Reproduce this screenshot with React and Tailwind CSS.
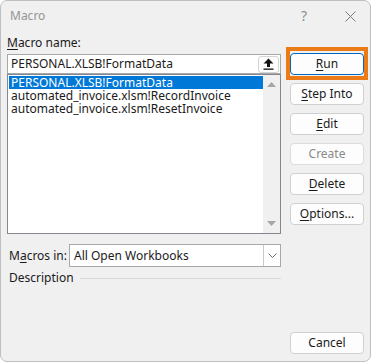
import React from "react";

function U({ children }) {
  return <span className="underline underline-offset-[2px] decoration-1">{children}</span>;
}

function Btn({ children, disabled, primary, className = "" }) {
  return (
    <button
      className={
        "h-[22px] w-[74px] rounded-[4px] border bg-[#fdfdfd] text-[12px] leading-[16px] " +
        (primary
          ? "border-[#0067c0] text-[#1a1a1a] "
          : disabled
          ? "border-[#dcdcdc] text-[#8a8a8a] "
          : "border-[#d0d0d0] text-[#1a1a1a] ") +
        className
      }
    >
      {children}
    </button>
  );
}

function UploadIcon() {
  return (
    <svg width="11" height="12" viewBox="0 0 11 12">
      <path d="M5.5 0.5 L10.5 5.5 L7 5.5 L7 9 L4 9 L4 5.5 L0.5 5.5 Z" fill="#111" />
      <rect x="0.5" y="10.5" width="10" height="1.3" fill="#111" />
    </svg>
  );
}

function Chevron() {
  return (
    <svg width="9" height="5" viewBox="0 0 9 5">
      <path d="M0.5 0.5 L4.5 4.5 L8.5 0.5" fill="none" stroke="#6b6b6b" strokeWidth="1" />
    </svg>
  );
}

export default function App() {
  const rows = [
    "PERSONAL.XLSB!FormatData",
    "automated_invoice.xlsm!RecordInvoice",
    "automated_invoice.xlsm!ResetInvoice",
  ];

  return (
    <div className="w-[372px] h-[363px] bg-white font-['Noto_Sans','Open_Sans',sans-serif] text-[12px] leading-[16px] text-[#1a1a1a] relative">
      <div className="w-[371px] h-[362px] rounded-[7px] border border-[#bfbfbf] bg-[#f0f0f0] flex flex-col overflow-hidden">
        {/* title bar */}
        <div className="h-[30px] flex items-center pl-[9px] pr-[14px] shrink-0">
          <span className="text-[12px] text-[#959595]">Macro</span>
          <span className="ml-auto text-[14px] text-[#8e8e8e] mr-[38px]">?</span>
          <svg width="11" height="11" viewBox="0 0 11 11">
            <path d="M0.5 0.5 L10.5 10.5 M10.5 0.5 L0.5 10.5" stroke="#7a7a7a" strokeWidth="1" />
          </svg>
        </div>

        <div className="flex flex-1 pl-[6px] pb-[7px]">
          {/* left column */}
          <div className="w-[274px] flex flex-col">
            <div className="mt-[4px] h-[16px]">
              <U>M</U>acro name:
            </div>
            <div className="mt-[3px] h-[20px] bg-white border border-[#a8a8a8] flex items-center pl-[3px] pr-[1px]">
              <span className="flex-1">PERSONAL.XLSB!FormatData</span>
              <div className="w-[21px] h-[17px] rounded-[3px] border border-[#d4d4d4] bg-[#fdfdfd] flex items-center justify-center">
                <UploadIcon />
              </div>
            </div>
            <div className="h-[160px] bg-white border border-[#828790] flex">
              <div className="flex-1 pt-[1px] pl-[1px]">
                {rows.map((r, i) => (
                  <div
                    key={r}
                    className={
                      "h-[13px] leading-[13px] pl-[2px] " +
                      (i === 0 ? "bg-[#0078d7] text-white" : "")
                    }
                  >
                    {r}
                  </div>
                ))}
              </div>
              <div className="w-[17px] bg-[#f0f0f0] flex flex-col items-center justify-between py-[7px]">
                <svg width="9" height="5" viewBox="0 0 9 5">
                  <path d="M4.5 0 L9 5 L0 5 Z" fill="#a6a6a6" />
                </svg>
                <svg width="9" height="5" viewBox="0 0 9 5">
                  <path d="M0 0 L9 0 L4.5 5 Z" fill="#a6a6a6" />
                </svg>
              </div>
            </div>

            <div className="mt-[10px] flex items-center">
              <span className="w-[62px] pl-[2px]">
                M<U>a</U>cros in:
              </span>
              <div className="w-[212px] h-[23px] bg-white border border-[#a8a8a8] flex items-center">
                <span className="flex-1 pl-[4px]">All Open Workbooks</span>
                <div className="w-[17px] h-full border-l border-[#c8c8c8] flex items-center justify-center">
                  <Chevron />
                </div>
              </div>
            </div>

            <div className="mt-[3px] flex items-center pl-[2px]">
              <span>Description</span>
              <div className="flex-1 ml-[6px] h-px bg-[#d9d9d9]" />
            </div>
          </div>

          {/* right column */}
          <div className="ml-[9px] pt-[22px] flex flex-col gap-[8px]">
            <Btn primary>
              <U>R</U>un
            </Btn>
            <Btn>
              <U>S</U>tep Into
            </Btn>
            <Btn>
              <U>E</U>dit
            </Btn>
            <Btn disabled>Create</Btn>
            <Btn>
              <U>D</U>elete
            </Btn>
            <Btn>
              <U>O</U>ptions...
            </Btn>
            <Btn className="mt-auto">Cancel</Btn>
          </div>
        </div>
      </div>

      {/* highlight annotation around Run */}
      <div className="absolute left-[286px] top-[47px] w-[82px] h-[33px] border-[4px] border-[#ec7a17]" />
    </div>
  );
}
